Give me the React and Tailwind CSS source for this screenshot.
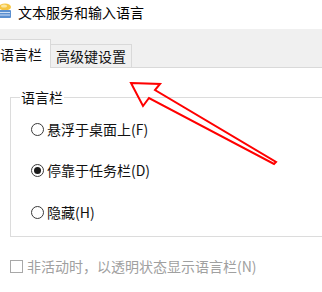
import React from "react";

const ziti = {
  fontFamily: '"Noto Sans CJK SC", "Microsoft YaHei", sans-serif',
};

function IkonJudul() {
  return (
    <svg width="11" height="15" viewBox="0 0 11 15" className="shrink-0 -mt-[3px]">
      <ellipse cx="5" cy="4" rx="6" ry="3.6" fill="#f5c542" />
      <ellipse cx="4" cy="3" rx="3" ry="1.6" fill="#fbe7a1" />
      <rect x="-1" y="7" width="12" height="8" rx="1" fill="#5a8fd0" />
      <rect x="0" y="9" width="10" height="1" fill="#cfe0f5" />
      <rect x="0" y="11.5" width="10" height="1" fill="#cfe0f5" />
    </svg>
  );
}

function PilihanRadio({ label, dipilih }) {
  return (
    <div className="flex h-[20px] items-center">
      <span className="ml-[20px] flex h-[13px] w-[13px] items-center justify-center rounded-full border border-[#3a3a3a] bg-white">
        {dipilih && <span className="h-[7px] w-[7px] rounded-full bg-[#1a1a1a]" />}
      </span>
      <span className="ml-[3px] text-[14px] leading-[20px] text-[#111]">{label}</span>
    </div>
  );
}

function PanahMerah() {
  return (
    <svg
      className="pointer-events-none absolute left-0 top-0"
      width="322"
      height="292"
      viewBox="0 0 322 292"
    >
      <polygon
        points="131,83 160,84 155,90 276,162 274,164 149,98 143,106"
        fill="none"
        stroke="#ff0000"
        strokeWidth="2"
        strokeLinejoin="miter"
      />
    </svg>
  );
}

export default function App() {
  return (
    <div className="relative h-[292px] w-[322px] overflow-hidden bg-white" style={ziti}>
      {/* judul jendela */}
      <div className="flex h-[29px] items-start pt-[2px]">
        <div className="flex h-[20px] items-center">
          <IkonJudul />
          <span className="ml-[7px] text-[14px] leading-[20px] text-black">文本服务和输入语言</span>
        </div>
      </div>

      {/* deretan tab */}
      <div className="flex h-[39px] items-end border-b border-[#d9d9d9] bg-[#f0f0f0]">
        <div className="-mb-px flex h-[29px] w-[51px] items-center border-r border-t border-[#d9d9d9] bg-white">
          <span className="text-[14px] leading-[20px] text-[#111]">语言栏</span>
        </div>
        <div className="flex h-[23px] items-center border-r border-t border-[#d9d9d9] bg-[#f0f0f0] px-[5px]">
          <span className="text-[14px] leading-[20px] text-[#111]">高级键设置</span>
        </div>
      </div>

      {/* isi tab */}
      <div className="pt-[19px]">
        <fieldset className="ml-[10px] w-[330px] border border-[#dcdcdc] pb-[14px] pl-[9px]">
          <legend className="px-px text-[14px] leading-[20px] text-[#111]">语言栏</legend>
          <div className="-ml-[9px] flex flex-col pt-[12px]">
            <PilihanRadio label="悬浮于桌面上(F)" />
            <div className="h-[21px]" />
            <PilihanRadio label="停靠于任务栏(D)" dipilih />
            <div className="h-[22px]" />
            <PilihanRadio label="隐藏(H)" />
          </div>
        </fieldset>

        <div className="mt-[19px] flex h-[20px] items-center">
          <span className="ml-[10px] h-[13px] w-[13px] border border-[#a8a8a8] bg-white" />
          <span className="ml-[4px] text-[14px] leading-[20px] text-[#a0a0a0]">
            非活动时，以透明状态显示语言栏(N)
          </span>
        </div>
      </div>

      <PanahMerah />
    </div>
  );
}
